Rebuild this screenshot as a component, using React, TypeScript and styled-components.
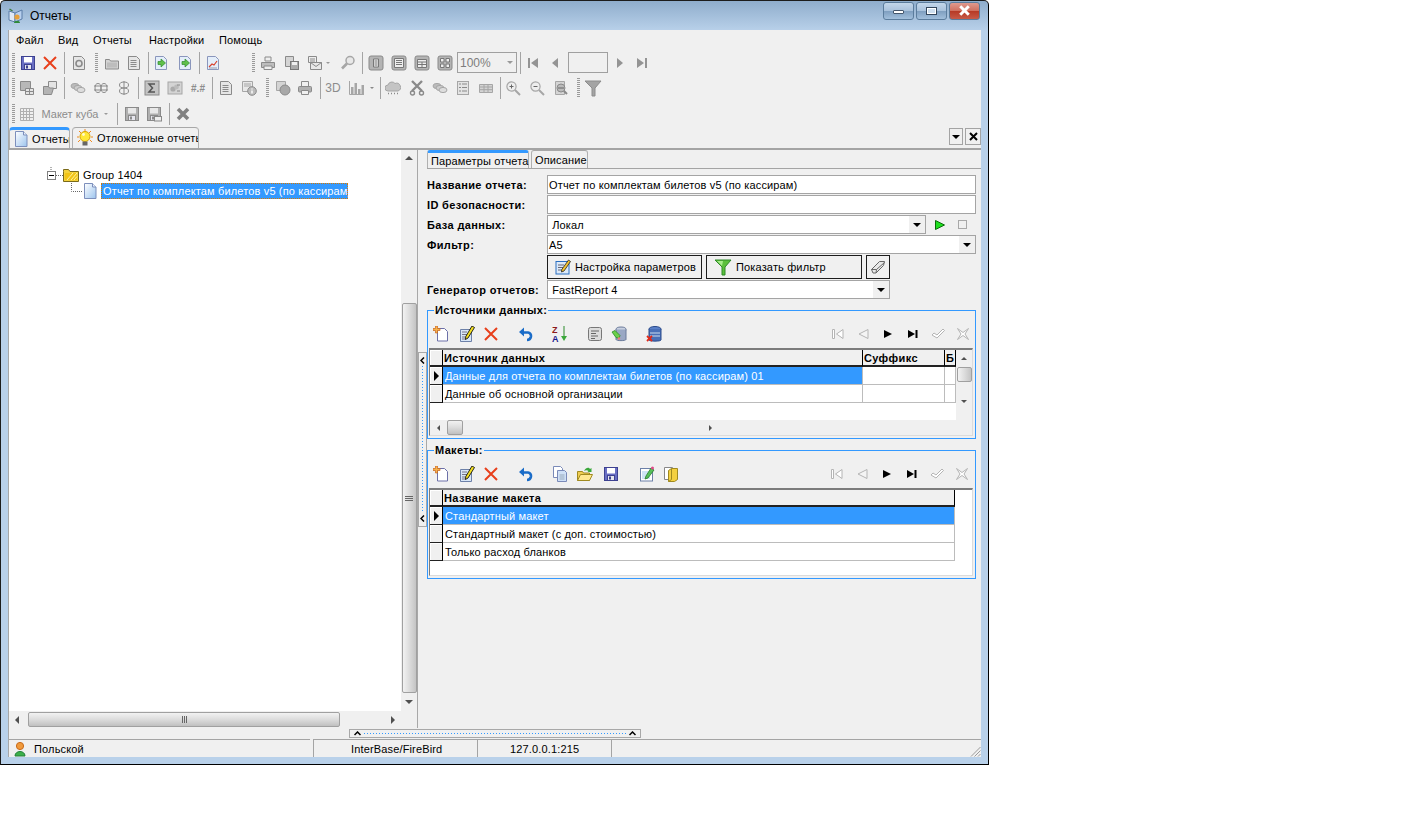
import React from "react";
import styled, { createGlobalStyle } from "styled-components";

const Global = createGlobalStyle`
  html, body { margin: 0; padding: 0; background: #fff; }
  body { font-family: "Liberation Sans", Arial, sans-serif; font-size: 11px; color: #000; }
  * { box-sizing: border-box; }
  svg { display: block; flex: none; }
`;

const Window = styled.div`
  width: 989px; height: 765px;
  border: 1px solid #1c1c1c; border-bottom-color: #000; border-right-color: #000;
  border-radius: 5px 5px 0 0;
  padding: 0 7px 7px 7px;
  background: linear-gradient(#8fadcc 0, #b9d1ea 30px, #b9d1ea 100%);
  display: flex; flex-direction: column;
`;
const TitleBar = styled.div`
  height: 29px; display: flex; align-items: center; flex: none; position: relative;
`;
const TitleText = styled.span` font-size: 12px; margin-left: 6px; `;
const WinButtons = styled.div`
  margin-left: auto; margin-right: 1px; margin-top: -10px; display: flex; gap: 2px;
`;
const WinBtn = styled.div<{ $w: number; $close?: boolean }>`
  width: ${p => p.$w}px; height: 18px; border: 1px solid #5b7c9c; border-radius: 3px;
  display: flex; align-items: center; justify-content: center;
  background: ${p => p.$close
    ? "linear-gradient(#e09a8e 0, #d0705f 48%, #b73a26 52%, #c75a48 100%)"
    : "linear-gradient(#c3d6ea 0, #a9c2dc 48%, #7f9fc0 52%, #a2bfdc 100%)"};
`;
const MinGlyph = styled.div`
  width: 11px; height: 4px; margin-top: 3px; background: #fff; border: 1px solid #44566c; border-radius: 1px;
`;
const MaxGlyph = styled.div`
  width: 11px; height: 8px; background: #cfe0f0; border: 1px solid #33465c; box-shadow: inset 0 0 0 1px #fff; 
`;

const Client = styled.div`
  flex: 1; display: flex; flex-direction: column; background: #f0f0f0; min-height: 0;
  border-left: 1px solid #a8a8a8;
`;
const MenuBar = styled.div`
  height: 20px; display: flex; align-items: center; flex: none;
`;
const MenuItem = styled.span<{ $w: number }>`
  width: ${p => p.$w}px; flex: none; white-space: nowrap; letter-spacing: .15px;
`;
const MenuLead = styled.div` width: 7px; flex: none; `;

const Toolbar = styled.div<{ $h: number }>`
  height: ${p => p.$h}px; display: flex; align-items: center; flex: none;
`;
const Grip = styled.div<{ $w: number }>`
  width: ${p => p.$w}px; height: 20px; flex: none; display: flex; justify-content: center;
  &::before { content: ""; width: 3px; height: 100%;
    background: repeating-linear-gradient(#9a9a9a 0 1px, transparent 1px 2px); }
`;
const Cell = styled.div<{ $w: number }>`
  width: ${p => p.$w}px; flex: none; height: 22px; display: flex; align-items: center; justify-content: center;
`;
const Sep = styled.div<{ $w: number }>`
  width: ${p => p.$w}px; flex: none; height: 22px; display: flex; justify-content: center;
  &::before { content: ""; width: 1px; height: 100%; background: #a4a4a4; }
`;
const DisabledText = styled.span<{ $bold?: boolean; $size?: number }>`
  color: #8c8c8c; font-size: ${p => p.$size ?? 11}px; font-weight: ${p => (p.$bold ? 700 : 400)}; white-space: nowrap;
`;
const ZoomCombo = styled.div`
  width: 60px; height: 21px; border: 1px solid #a0a0a0; flex: none; margin-left: 2px;
  display: flex; align-items: center; justify-content: space-between; padding: 0 3px 0 2px;
  color: #7d7d7d; font-size: 12px; background: #f0f0f0;
`;
const PageInput = styled.div`
  width: 40px; height: 21px; border: 1px solid #a0a0a0; flex: none; margin-left: 1px;
`;
const Tri = styled.i<{ $dir: "l" | "r" | "u" | "d"; $size?: number; $color?: string }>`
  display: block; width: 0; height: 0; flex: none;
  ${p => {
    const s = p.$size ?? 3; const c = p.$color ?? "#000";
    switch (p.$dir) {
      case "l": return `border-top:${s}px solid transparent;border-bottom:${s}px solid transparent;border-right:${s}px solid ${c};`;
      case "r": return `border-top:${s}px solid transparent;border-bottom:${s}px solid transparent;border-left:${s}px solid ${c};`;
      case "u": return `border-left:${s}px solid transparent;border-right:${s}px solid transparent;border-bottom:${s}px solid ${c};`;
      default: return `border-left:${s}px solid transparent;border-right:${s}px solid transparent;border-top:${s}px solid ${c};`;
    }
  }}
`;

const TabStrip = styled.div`
  height: 24px; flex: none; display: flex; align-items: flex-end; padding-left: 0; gap: 2px;
  border-bottom: 2px solid #a4a4a4;
`;
const Tab = styled.div<{ $w: number; $active?: boolean }>`
  width: ${p => p.$w}px; height: 21px; display: flex; align-items: center; gap: 3px; padding-left: 3px;
  border: 1px solid #b0b0b0; border-bottom: 0; border-radius: 4px 4px 0 0;
  border-top: ${p => (p.$active ? "3px solid #3399ff" : "1px solid #a8a8a8")};
  white-space: nowrap; overflow: hidden; letter-spacing: .15px;
`;
const DockButtons = styled.div`
  margin-left: auto; display: flex; gap: 2px; align-self: flex-start; margin-top: 2px;
`;
const DockBtn = styled.div<{ $w: number }>`
  width: ${p => p.$w}px; height: 17px; border: 1px solid #a4a4a4; display: flex; align-items: center; justify-content: center;
`;

const Main = styled.div` flex: 1; min-height: 0; display: flex; `;
const LeftPane = styled.div`
  width: 409px; flex: none; display: flex; flex-direction: column; border-right: 1px solid #a8a8a8;
`;
const LeftBody = styled.div` flex: 1; display: flex; min-height: 0; `;
const Tree = styled.div` flex: 1; background: #fff; padding-top: 17px; `;
const TreeRow = styled.div<{ $indent: number }>`
  height: 16px; display: flex; align-items: center; padding-left: ${p => p.$indent}px; white-space: nowrap;
`;
const TreeLabel = styled.span` margin-left: 4px; letter-spacing: .15px; `;
const TreeSelected = styled.span`
  margin-left: 3px; height: 16px; width: 247px; padding: 0 1px; display: flex; align-items: center;
  background: #3399ff; color: #fff; border: 1px dotted #d97a00; outline: 0; letter-spacing: .15px;
`;

const VScroll = styled.div<{ $w: number }>`
  width: ${p => p.$w}px; flex: none; background: #f0f0f0; display: flex; flex-direction: column; align-items: center;
`;
const ScrollEnd = styled.div<{ $h: number }>`
  height: ${p => p.$h}px; flex: none; display: flex; align-items: center; justify-content: center; width: 100%;
`;
const VThumb = styled.div<{ $h: number; $mt: number }>`
  width: 15px; height: ${p => p.$h}px; margin-top: ${p => p.$mt}px; flex: none;
  border: 1px solid #a0a0a0; border-radius: 2px;
  background: linear-gradient(90deg, #f2f2f2, #dcdcdc 50%, #c4c4c4);
  display: flex; align-items: center; justify-content: center;
`;
const ThumbGripV = styled.div`
  width: 8px; height: 5px; margin-left: 0;
  background: repeating-linear-gradient(#666 0 1px, transparent 1px 2px);
`;
const HScroll = styled.div<{ $h: number }>`
  height: ${p => p.$h}px; flex: none; display: flex; align-items: center; background: #f0f0f0;
`;
const HThumb = styled.div<{ $w: number; $ml: number }>`
  width: ${p => p.$w}px; margin-left: ${p => p.$ml}px; height: 15px; flex: none;
  border: 1px solid #a0a0a0; border-radius: 2px;
  background: linear-gradient(#f2f2f2, #dcdcdc 50%, #c0c0c0);
  display: flex; align-items: center; justify-content: center;
`;
const ThumbGripH = styled.div`
  width: 5px; height: 7px;
  background: repeating-linear-gradient(90deg, #666 0 1px, transparent 1px 2px);
`;
const ScrollEndH = styled.div<{ $w: number }>`
  width: ${p => p.$w}px; flex: none; height: 100%; display: flex; align-items: center; justify-content: center;
`;

const VSplitColumn = styled.div`
  width: 9px; flex: none; padding-top: 202px;
`;
const VHandle = styled.div`
  width: 9px; height: 175px; margin-left: 0; border: 1px solid #a8a8a8; display: flex; flex-direction: column;
  align-items: center; padding: 4px 0;
`;
const DotsV = styled.div`
  flex: 1; width: 1px; margin: 2px 0;
  background: repeating-linear-gradient(#3399ff 0 1px, transparent 1px 3px);
`;
const Chevron = styled.svg` flex: none; `;

const RightPane = styled.div` flex: 1; min-width: 0; display: flex; flex-direction: column; padding-right: 0; `;
const SubTabs = styled.div`
  height: 19px; flex: none; display: flex; align-items: flex-end; gap: 2px; border-bottom: 1px solid #a4a4a4;
`;
const SubTab = styled.div<{ $w: number; $active?: boolean }>`
  width: ${p => p.$w}px; height: 18px; display: flex; align-items: center; padding-left: 3px;
  margin-top: 0; border: 1px solid #b0b0b0; border-bottom: 0; border-radius: 3px 3px 0 0;
  border-top: ${p => (p.$active ? "3px solid #3399ff" : "1px solid #a8a8a8")};
  white-space: nowrap; letter-spacing: .15px;
`;
const RightBody = styled.div` padding: 6px 5px 0 0; display: flex; flex-direction: column; `;

const Form = styled.div`
  display: grid; grid-template-columns: 120px 1fr; row-gap: 1px;
`;
const Label = styled.div`
  font-weight: 700; display: flex; align-items: center; white-space: nowrap; letter-spacing: .35px; height: 19px;
`;
const TextBox = styled.div`
  height: 19px; border: 1px solid #a4a4a4; background: #fff; display: flex; align-items: center; padding-left: 1px;
  white-space: nowrap; letter-spacing: .15px; min-width: 0; flex: 1;
`;
const ComboArrow = styled.div`
  margin-left: auto; width: 16px; height: 17px; background: #f0f0f0; display: flex; align-items: center; justify-content: center; flex: none;
`;
const DbRow = styled.div` display: flex; align-items: center; `;
const DbExtras = styled.div` width: 50px; flex: none; display: flex; align-items: center; padding-left: 8px; gap: 12px; `;
const StopBox = styled.div` width: 9px; height: 9px; border: 1px solid #a8a8a8; flex: none; `;
const Spacer = styled.div``;
const ButtonRow = styled.div` display: flex; gap: 4px; height: 24px; `;
const ActionButton = styled.div<{ $w: number }>`
  width: ${p => p.$w}px; height: 24px; border: 1px solid #1c1c1c; background: #f0f0f0;
  display: flex; align-items: center; padding-left: 7px; gap: 4px; white-space: nowrap; letter-spacing: .15px; flex: none;
`;
const EraserButton = styled(ActionButton)` justify-content: center; padding: 0; gap: 0; `;
const GenCombo = styled(TextBox)` flex: none; width: 343px; `;

const Group = styled.div<{ $pr: number }>`
  height: 129px; margin-top: 11px; border: 1px solid #3399ff; flex: none; display: flex; flex-direction: column;
  --pr: ${p => p.$pr}px;
`;
const Legend = styled.div`
  margin: -8px 0 0 6px; width: fit-content; padding: 0 1px; height: 14px; line-height: 14px;
  background: #f0f0f0; font-weight: 700; letter-spacing: .35px; white-space: nowrap;
`;
const GroupTools = styled.div`
  height: 22px; margin-top: 6px; display: flex; align-items: center; flex: none; padding-right: var(--pr);
`;
const GroupIcon = styled.div<{ $gap: number }>`
  width: 22px; height: 22px; margin-left: ${p => p.$gap}px; flex: none; display: flex; align-items: center; justify-content: center;
`;
const NavGroup = styled.div` margin-left: auto; display: flex; `;
const NavIcon = styled.div` width: 25px; height: 22px; display: flex; align-items: center; justify-content: center; `;

const GridFrame = styled.div`
  margin: 3px 2px 2px 1px; flex: 1; min-height: 0; background: #fff;
  border-top: 2px solid #7c7c7c; border-left: 1px solid #7c7c7c;
  border-right: 1px solid #dcdcdc; border-bottom: 1px solid #dcdcdc;
  display: flex; flex-direction: column;
`;
const GridTop = styled.div` flex: 1; display: flex; min-height: 0; `;
const GridColumns = styled.div` flex: 1; min-width: 0; display: flex; flex-direction: column; `;
const GridRow = styled.div` display: flex; height: 18px; flex: none; `;
const HeaderRow = styled(GridRow)` height: 17px; `;
const Indicator = styled.div<{ $header?: boolean }>`
  width: 13px; flex: none; background: #f0f0f0; display: flex; align-items: center; justify-content: center;
  border-right: 1px solid #000; border-bottom: ${p => (p.$header ? "2px solid #222" : "1px solid #222")};
  box-shadow: inset 1px 1px 0 #fff;
`;
const HeaderCell = styled.div<{ $w: number }>`
  width: ${p => p.$w}px; flex: none; background: #f0f0f0; font-weight: 700; letter-spacing: .35px;
  border-right: 1px solid #000; border-bottom: 2px solid #222; padding-left: 1px; overflow: hidden; white-space: nowrap;
  display: flex; align-items: center;
`;
const DataCell = styled.div<{ $w: number; $sel?: boolean }>`
  width: ${p => p.$w}px; flex: none; overflow: hidden; white-space: nowrap; padding-left: 2px; letter-spacing: .15px;
  display: flex; align-items: center;
  color: ${p => (p.$sel ? "#fff" : "#000")};
  background: ${p => (p.$sel ? "#3399ff" : "#fff")};
  border-right: 1px solid #bcbcbc; border-bottom: 1px solid #bcbcbc;
`;

const HSplitRow = styled.div` height: 11px; flex: none; padding: 1px 0 0 340px; `;
const HHandle = styled.div`
  width: 292px; height: 9px; border: 1px solid #a8a8a8; display: flex; align-items: center; padding: 0 4px; gap: 3px;
`;
const DotsH = styled.div`
  flex: 1; height: 1px;
  background: repeating-linear-gradient(90deg, #3399ff 0 1px, transparent 1px 3px);
`;

const StatusBar = styled.div` height: 18px; flex: none; display: flex; `;
const StatusPanel = styled.div<{ $w?: number; $pl: number; $first?: boolean }>`
  ${p => (p.$w ? `width:${p.$w}px;flex:none;` : "flex:1;")}
  border-top: 1px solid #a4a4a4; border-left: ${p => (p.$first ? "0" : "1px solid #a4a4a4")};
  padding-left: ${p => p.$pl}px; display: flex; align-items: center; gap: 5px; white-space: nowrap; letter-spacing: .15px;
  position: relative;
`;
const StatusGap = styled.div` width: 3px; flex: none; `;
const ResizeGrip = styled.svg` position: absolute; right: 0; bottom: 0; `;

/* ---------- icons ---------- */
const S: React.FC<{ children: React.ReactNode; w?: number; h?: number }> = ({ children, w = 16, h = 16 }) => (
  <svg width={w} height={h} viewBox={`0 0 ${w} ${h}`}>{children}</svg>
);

const Floppy = ({ body, dark, label = "#fff", small }: { body: string; dark: string; label?: string; small?: boolean }) => (
  <S>
    <rect x="1.5" y="1.5" width="13" height="13" fill={body} stroke={dark} />
    <rect x="4" y="2" width="8" height="5.5" fill={label} />
    <rect x="4.5" y="9.5" width="7" height="5" fill="#e6e6ee" stroke={dark} />
    <rect x="6" y="10.5" width="2" height="3" fill={dark} />
    {small && <rect x="8.5" y="10.5" width="7" height="4.5" fill="#eee" stroke="#888" />}
  </S>
);
const RedX = () => (
  <S><path d="M2 2l12 12M14 2L2 14" stroke="#e8401c" strokeWidth="2" fill="none" /></S>
);
const DocBase = ({ children, stroke = "#8a96bc", fill = "#e4eefa" }: { children?: React.ReactNode; stroke?: string; fill?: string }) => (
  <S>
    <path d="M2.5 1.5h8l3 3v10h-11z" fill={fill} stroke={stroke} />
    {children}
  </S>
);
const DocArrow = () => (
  <DocBase><path d="M5 6.5h3V4l4.5 4-4.5 4V9.5H5z" fill="#5fc04a" stroke="#2f8a2c" strokeWidth=".7" /></DocBase>
);
const DocChart = () => (
  <DocBase><path d="M4 12l3-3 2 1 3-4" stroke="#d8402c" strokeWidth="1.2" fill="none" /><path d="M4 13h8" stroke="#99a" /></DocBase>
);
const G = "#a6a6a6"; const GD = "#8a8a8a"; const GL = "#d4d4d4";
const grayDoc = (children?: React.ReactNode) => <DocBase stroke={GD} fill="#e6e6e6">{children}</DocBase>;
const GrayLines = () => grayDoc(<path d="M4.5 5.5h6M4.5 7.5h6M4.5 9.5h6M4.5 11.5h6" stroke={GD} />);
const GrayRefresh = () => grayDoc(<circle cx="8" cy="8.5" r="3" fill="none" stroke={GD} strokeWidth="1.6" />);
const GrayFolder = () => (
  <S><path d="M1.5 4.5h4l1 1.5h8v8h-13z" fill={GL} stroke={GD} /><path d="M3 7.5h10v5H3z" fill="#bdbdbd" /></S>
);
const GrayPrinter = () => (
  <S><path d="M5 2h6v4H5z" fill="#eee" stroke={GD} /><path d="M1.5 7.5h13v5h-13z" fill="#bdbdbd" stroke={GD} /><path d="M4 11h8v3.5H4z" fill="#eee" stroke={GD} /></S>
);
const GrayDocFloppy = () => (
  <S><path d="M1.5 1.5h8v10h-8z" fill={GL} stroke={GD} /><rect x="6.5" y="6.5" width="8" height="8" fill="#aaa" stroke="#777" /><rect x="8" y="7" width="5" height="3" fill="#eee" /></S>
);
const GrayMail = () => (
  <S><path d="M1.5 1.5h8v6h-8z" fill="#eee" stroke={GD} /><path d="M3 4h5M3 6h5" stroke={GD} /><path d="M3.5 7.5h11v7h-11z" fill="#e8e8e8" stroke={GD} /><path d="M3.5 7.5l5.5 4 5.5-4" fill="none" stroke={GD} /></S>
);
const GrayMagnifier = () => (
  <S><circle cx="10" cy="5.5" r="4" fill="#e8e8e8" stroke={G} strokeWidth="1.5" /><path d="M7 8.5l-5 5" stroke={G} strokeWidth="2.6" /></S>
);
const GrayPage = ({ kind }: { kind: number }) => (
  <S>
    <rect x="1" y="1" width="14" height="14" rx="2" fill="#b4b4b4" stroke={GD} />
    {kind === 0 && <path d="M5.5 4h5v8h-5zM6.5 6h3M6.5 8h3M6.5 10h3" fill="#eee" stroke="#777" />}
    {kind === 1 && <path d="M3.5 3.5h9v9h-9zM5 5.5h6M5 7.5h6M5 9.5h6" fill="#eee" stroke="#777" />}
    {kind === 2 && <path d="M3.5 4.5h9v8h-9zM3.5 7h9M3.5 9.5h9M8 7v5.5" fill="#eee" stroke="#777" />}
    {kind === 3 && <path d="M3.5 3.5h3.5v3.5h-3.5zM9 3.5h3.5v3.5H9zM3.5 9h3.5v3.5h-3.5zM9 9h3.5v3.5H9z" fill="#eee" stroke="#777" />}
  </S>
);
const TriFirst = ({ c = "#949494" }: { c?: string }) => (
  <S w={14} h={12}><path d="M2 1h2v10H2zM12 1v10L5 6z" fill={c} /></S>
);
const TriLast = ({ c = "#949494" }: { c?: string }) => (
  <S w={14} h={12}><path d="M10 1h2v10h-2zM2 1v10l7-5z" fill={c} /></S>
);
const GrayTriPrev = () => <S w={10} h={12}><path d="M8 1v10L2 6z" fill="#949494" /></S>;
const GrayTriNext = () => <S w={10} h={12}><path d="M2 1v10l6-5z" fill="#949494" /></S>;
const GrayFloppyGrid = () => (
  <S><path d="M1.5 1.5h10v9h-10z" fill="#b8b8b8" stroke={GD} /><path d="M6.5 8.5h8v6h-8z" fill="#e4e4e4" stroke={GD} /><path d="M6.5 11.5h8M10.5 8.5v6" stroke={GD} /></S>
);
const GrayFolderOpen = () => (
  <S><path d="M6.5 1.5h8v7h-8z" fill="#e4e4e4" stroke={GD} /><path d="M1.5 6.5h5l1 1.5h4l-2 6.5h-8z" fill="#b4b4b4" stroke={GD} /></S>
);
const GrayStack = () => (
  <S><ellipse cx="5" cy="6" rx="4" ry="2.6" fill="#bbb" stroke={G} /><ellipse cx="8" cy="8" rx="4" ry="2.6" fill="#ccc" stroke={G} /><ellipse cx="11" cy="10" rx="4" ry="2.6" fill="#ddd" stroke={G} /></S>
);
const GrayRings = () => (
  <S><ellipse cx="5" cy="8" rx="3" ry="4.5" fill="none" stroke={GD} /><ellipse cx="11" cy="8" rx="3" ry="4.5" fill="none" stroke={GD} /><path d="M1 6h14M1 10h14" stroke={GD} /></S>
);
const GrayRings2 = () => (
  <S><ellipse cx="8" cy="5" rx="4.5" ry="3" fill="none" stroke={GD} /><ellipse cx="8" cy="11" rx="4.5" ry="3" fill="none" stroke={GD} /><path d="M8 1v14" stroke={GD} /></S>
);
const GraySigma = () => (
  <S><rect x="1" y="1" width="14" height="14" fill="#c4c4c4" stroke={GD} /><path d="M11 4H5l3.5 4L5 12h6" fill="none" stroke="#555" strokeWidth="1.5" /></S>
);
const GrayPicture = () => (
  <S><rect x="1" y="2" width="14" height="12" fill={GL} stroke={G} /><circle cx="6" cy="9" r="2.6" fill="#aaa" /><circle cx="9.5" cy="7" r="2.4" fill="#bbb" /><path d="M10 11h3M10 5h3" stroke={GD} /></S>
);
const GrayInfo = () => (
  <S><path d="M1.5 1.5h10v10h-10z" fill="#e8e8e8" stroke={G} /><path d="M3 4h7M3 6h7" stroke={G} /><circle cx="11" cy="11" r="4.3" fill="#bbb" stroke={GD} /><path d="M11 8.5v1M11 10.5v3" stroke="#fff" strokeWidth="1.4" /></S>
);
const GrayPie = () => (
  <S><path d="M1.5 1.5h9v9h-9z" fill={GL} stroke={G} /><circle cx="10" cy="10" r="5" fill="#a8a8a8" stroke={GD} /></S>
);
const GrayPrinter2 = () => (
  <S><path d="M4.5 1.5h7v5h-7z" fill="#f0f0f0" stroke={GD} /><rect x="1.5" y="6.5" width="13" height="5.5" rx="1" fill="#b0b0b0" stroke={GD} /><path d="M4.5 10.5h7v4h-7z" fill="#f0f0f0" stroke={GD} /></S>
);
const GrayChart = () => (
  <S><path d="M1.5 1v13.5H16" fill="none" stroke={G} /><path d="M3 7h2.5v7H3zM6.5 3h2.5v11H6.5zM10 9h2.5v5H10zM13.5 5H16v9h-2.5z" fill={G} /></S>
);
const GrayCloud = () => (
  <S><path d="M3 11a3 3 0 010-6 4 4 0 017-1.5A3.6 3.6 0 0113 11z" fill="#c4c4c4" stroke={G} /><path d="M3 13.5h1M6 13.5h1M9 13.5h1M12 13.5h1" stroke={GD} strokeWidth="1.5" /></S>
);
const GrayScissors = () => (
  <S><path d="M3 1l10 10M13 1L3 11" stroke={GD} strokeWidth="2.4" /><circle cx="3.5" cy="13" r="2" fill="none" stroke={GD} strokeWidth="1.4" /><circle cx="12.5" cy="13" r="2" fill="none" stroke={GD} strokeWidth="1.4" /></S>
);
const GrayList = () => (
  <S><rect x="2.5" y="1.5" width="11" height="13" fill="#e4e4e4" stroke={G} /><path d="M4 4h2M4 7.5h2M4 11h2M7 4h5M7 7.5h5M7 11h5" stroke={GD} /></S>
);
const GrayTable = () => (
  <S><path d="M1.5 4.5h13v8h-13zM1.5 7h13M1.5 9.7h13M6 4.5v8M10 4.5v8" fill={GL} stroke={G} /></S>
);
const Zoom = ({ mark }: { mark: "+" | "-" }) => (
  <S>
    <circle cx="6.5" cy="6.5" r="4.6" fill="#eee" stroke={G} strokeWidth="1.2" />
    <path d="M10 10l5 5" stroke={G} strokeWidth="2" />
    <path d={mark === "+" ? "M4.5 6.5h4M6.5 4.5v4" : "M4.5 6.5h4"} stroke="#666" />
  </S>
);
const GrayDocZoom = () => (
  <S><path d="M2.5 1.5h9v13h-9z" fill={GL} stroke={G} /><circle cx="8" cy="8" r="4" fill="#bbb" stroke={GD} /><path d="M5 8h6" stroke="#666" /><path d="M11 11l3 3" stroke={GD} strokeWidth="2" /></S>
);
const GrayFunnel = () => (
  <S w={18} h={18}><path d="M1 2h16l-6 7v8H8V9z" fill="#a4a4a4" stroke="#8c8c8c" /></S>
);
const GrayGrid = () => (
  <S><path d="M1.5 2.5h13v12h-13zM1.5 5.5h13M1.5 8.5h13M1.5 11.5h13M4.5 2.5v12M7.5 2.5v12M10.5 2.5v12" fill="none" stroke="#b0b0b0" /></S>
);
const GrayCross = () => (
  <S><path d="M3 3l10 10M13 3L3 13" stroke="#808080" strokeWidth="3.6" /></S>
);

const TitleIcon = () => (
  <S>
    <path d="M1 3l6 2v9L1 12z" fill="#dfe9f5" stroke="#5a7da8" />
    <path d="M7 5l7-3v9l-7 3z" fill="#b8d0ee" stroke="#5a7da8" />
    <circle cx="9" cy="9" r="2.6" fill="#e6a13a" />
    <path d="M6 15c0-3 6-3 6 0z" fill="#2e8a3a" />
    <path d="M1.5 1l3 2" stroke="#3a7a3a" strokeWidth="1.4" />
  </S>
);
const PageIcon = () => (
  <S w={16} h={18}>
    <defs>
      <linearGradient id="pg" x1="0" y1="0" x2="1" y2="1">
        <stop offset="0" stopColor="#fff" /><stop offset="1" stopColor="#9cc4ee" />
      </linearGradient>
    </defs>
    <path d="M2.5 1.5h8l3.5 3.5v11.5H2.5z" fill="url(#pg)" stroke="#7d8fbc" />
    <path d="M10.5 1.5v3.5H14" fill="#e8f0fa" stroke="#7d8fbc" />
  </S>
);
const Bulb = () => (
  <S w={18} h={18}>
    <path d="M1 8h2M15 8h2M3 2l2 2M15 2l-2 2M9 0v2M2 13l2-2M16 13l-2-2" stroke="#f08a20" />
    <circle cx="9" cy="7.5" r="5" fill="#ffe838" stroke="#d8a400" />
    <rect x="6.5" y="12.5" width="5" height="4" fill="#666" />
    <circle cx="7.5" cy="5.5" r="1.4" fill="#fffbd0" />
  </S>
);
const FolderYellow = () => (
  <S>
    <path d="M.5 4.5V2.5h5l1.5 2h8.5v10H.5z" fill="#f4d23c" stroke="#7a6a1a" />
    <path d="M2 6h12v7H2z" fill="#f2c416" />
    <path d="M8 13l6-7M11 13l3-3.5M4 13l6-7" stroke="#fff2a0" />
  </S>
);
const TreeExpander = () => (
  <S w={20} h={16}>
    <path d="M8 0v4" stroke="#666" strokeDasharray="1 1" />
    <rect x="4.5" y="4.5" width="8" height="8" fill="#fff" stroke="#808080" />
    <path d="M6 8.5h5" stroke="#000" />
    <path d="M13 8.5h7" stroke="#666" strokeDasharray="1 1" />
  </S>
);
const TreeConnector = () => (
  <S w={11} h={16}>
    <path d="M.5 0v8.5H11" fill="none" stroke="#666" strokeDasharray="1 1" />
  </S>
);
const ParamsIcon = () => (
  <S>
    <rect x="1" y="2.5" width="13" height="12.5" fill="#dce9f8" stroke="#2a6fc0" />
    <path d="M3 6h6M3 8.5h5M3 11h4" stroke="#667" />
    <path d="M13.5 1l2 1.5L9 12l-2.5 1 .3-2.5z" fill="#f4c430" stroke="#222" strokeWidth=".8" />
  </S>
);
const GreenFunnel = () => (
  <S w={18} h={18}>
    <path d="M1 2h16l-6 7v8H8V9z" fill="#5cc03c" stroke="#2f8a28" />
    <path d="M3 3h6l-1 5z" fill="#a8ec8c" />
  </S>
);
const Eraser = () => (
  <S w={16} h={16}>
    <path d="M1.5 10.5l8-8h5l-1 4-7.5 7.5H3z" fill="#e8e8e8" stroke="#666" />
    <path d="M1.5 10.5h5l-.5 3.5M6.5 10.5l8-7" fill="none" stroke="#666" />
  </S>
);
const NewDoc = () => (
  <S>
    <path d="M4.5 2.5h7l3 3v9.5h-10z" fill="#fff" stroke="#6c70a8" />
    <path d="M2.5 0h2v2.5H7v2H4.500v2.500h-2V4.500H0v-2h2.500z" fill="#f7b14a" stroke="#c8641a" strokeWidth=".7" />
  </S>
);
const EditDoc = () => (
  <S>
    <path d="M1.500 3.500h11v12h-11z" fill="#d8e6f6" stroke="#6c80a8" />
    <path d="M3 6h5M3 8.500h5M3 11h4M3 13h4" stroke="#778" />
    <path d="M13 0l2.500 1.500L9 12l-2.500 1.500.3-3z" fill="#f4e020" stroke="#111" strokeWidth=".9" />
  </S>
);
const Undo = () => (
  <S>
    <path d="M4 6.500h6a3.500 3.500 0 013 4c-.4 2-2 3.500-4 3.500" fill="none" stroke="#1a6cc8" strokeWidth="2.600" />
    <path d="M1 6l5-4.500v9z" fill="#1a6cc8" />
  </S>
);
const Sort = () => (
  <S w={18} h={18}>
    <text x="0" y="8" fontSize="9" fontWeight="700" fontFamily="Liberation Sans" fill="#8c1a1a">Z</text>
    <text x="0" y="17" fontSize="9" fontWeight="700" fontFamily="Liberation Sans" fill="#1a1a8c">A</text>
    <path d="M12 1v12" stroke="#2a8a2a" />
    <path d="M9 11h6l-3 5z" fill="#3aa83a" />
  </S>
);
const TextBoxIcon = () => (
  <S><rect x="1.500" y="1.500" width="13" height="13" rx="2" fill="#ddd" stroke="#777" /><path d="M4 5h8M4 7.500h5M4 10h7M4 12.500h4" stroke="#666" /></S>
);
const DbEdit = () => (
  <S>
    <ellipse cx="10" cy="3.500" rx="5" ry="2.500" fill="#c8d0e0" stroke="#6a7a9a" />
    <path d="M5 3.500v10c0 1.500 10 1.500 10 0v-10" fill="#9aa8c4" stroke="#6a7a9a" />
    <path d="M1 6l3-1.500 5 5-1 3-3-1z" fill="#6cd04a" stroke="#2a8a2a" strokeWidth=".8" />
    <circle cx="8" cy="12.500" r="1.200" fill="#f07a7a" />
  </S>
);
const DbDel = () => (
  <S>
    <ellipse cx="9" cy="3" rx="6" ry="2.500" fill="#5a80c8" stroke="#2a4a8a" />
    <path d="M3 3v11c0 1.500 12 1.500 12 0V3" fill="#4a70b8" stroke="#2a4a8a" />
    <path d="M4 7h10M4 10h10" stroke="#cde" />
    <path d="M1 10l5 5M6 10l-5 5" stroke="#e02a1a" strokeWidth="1.800" />
  </S>
);
const CopyDocs = () => (
  <S>
    <path d="M1.500 .5h7l2 2v9h-9z" fill="#fff" stroke="#7a8ab8" />
    <path d="M5.500 4.500h7l2 2v9h-9z" fill="#cfe0f6" stroke="#7a8ab8" />
    <path d="M7.500 9h5M7.500 11h5M7.500 13h5" stroke="#9ab" />
  </S>
);
const OpenFolder = () => (
  <S>
    <path d="M.5 5.500h5l1 1.500h6v7.500H.5z" fill="#f0cc50" stroke="#a08a20" />
    <path d="M.5 14.500l3-6h12l-3 6z" fill="#ffe890" stroke="#a08a20" />
    <path d="M7 5c2-4 5-4 6-2l1.500-1v4h-4l1-1c-1-1-3-1-4.500 0z" fill="#3aa83a" />
  </S>
);
const EditChart = () => (
  <S>
    <rect x="1.500" y="2.500" width="12" height="12.500" fill="#fff" stroke="#6c80a8" />
    <path d="M3 5h8v8H3z" fill="#cfe4f6" />
    <path d="M12 2l3 2-6 8-3 1 1-3z" fill="#55c05a" stroke="#2a7a2a" strokeWidth=".8" />
    <circle cx="13.500" cy="2" r="1.500" fill="#e04a8a" />
  </S>
);
const FoldersDoc = () => (
  <S>
    <path d="M1.500 1.500h8v12h-8z" fill="#fff" stroke="#888" />
    <path d="M5.500 4.500l3-2h6v11l-3 2h-6z" fill="#f4d040" stroke="#a08a20" />
    <path d="M8.500 2.500v11l-3 2" fill="none" stroke="#a08a20" />
  </S>
);
const OutlineFirst = () => <S><path d="M2.500 3.500h2v9h-2zM13 3.500v9L6.500 8z" fill="#fff" stroke="#b4b4b4" /></S>;
const OutlinePrev = () => <S><path d="M13 3.500v9L4 8z" fill="#f4f4f4" stroke="#b4b4b4" /></S>;
const BlackNext = () => <S><path d="M4 4v8l8-4z" fill="#000" /></S>;
const BlackLast = () => <S><path d="M3 4v8l7-4zM10.500 4h2v8h-2z" fill="#000" /></S>;
const OutlineCheck = () => <S><path d="M2 9l2-2 3 2 6-6 1.500 1.500L7 12z" fill="#fff" stroke="#b4b4b4" /></S>;
const OutlineX = () => <S><path d="M2.500 2.500l5.500 4 5.500-4-3.500 5.500 3.500 5.500L8 9.500l-5.500 4L6 8z" fill="#fff" stroke="#b4b4b4" /></S>;
const PlayGreen = () => <S w={12} h={12}><path d="M1.500 1.500v9l9-4.500z" fill="#1fe01f" stroke="#0a6a0a" /></S>;
const UserIcon = () => (
  <S>
    <circle cx="7" cy="5" r="3.600" fill="#f09a3c" stroke="#c86a1a" />
    <path d="M2 15c0-6 10-6 10 0z" fill="#3cb04a" stroke="#22803a" />
  </S>
);
const ChevL = () => (
  <Chevron width="5" height="7" viewBox="0 0 5 7"><path d="M4 .5L1 3.500 4 6.500" fill="none" stroke="#000" strokeWidth="1.500" /></Chevron>
);
const ChevU = () => (
  <Chevron width="7" height="5" viewBox="0 0 7 5"><path d="M.500 4L3.500 1 6.500 4" fill="none" stroke="#000" strokeWidth="1.500" /></Chevron>
);
const CloseGlyph = ({ c = "#000", s = 9, w = 2 }: { c?: string; s?: number; w?: number }) => (
  <svg width={s} height={s} viewBox="0 0 9 9"><path d="M1 1l7 7M8 1L1 8" stroke={c} strokeWidth={w} /></svg>
);

/* ---------- toolbar data ---------- */
type Item =
  | { t: "grip" | "sep" | "gap"; w: number }
  | { t: "icon"; w: number; el: React.ReactNode };
const ic = (w: number, el: React.ReactNode): Item => ({ t: "icon", w, el });
const grip = (w: number): Item => ({ t: "grip", w });
const sep = (w: number): Item => ({ t: "sep", w });

const row1: Item[] = [
  grip(8), ic(22, <Floppy body="#6a6fc4" dark="#3d4190" />), ic(22, <RedX />), sep(6),
  ic(23, <GrayRefresh />), grip(12), ic(20, <GrayFolder />), ic(24, <GrayLines />), sep(4),
  ic(22, <DocArrow />), ic(26, <DocArrow />), sep(2), ic(26, <DocChart />),
  { t: "gap", w: 23 }, grip(8), ic(22, <GrayPrinter />), ic(26, <GrayDocFloppy />), ic(20, <GrayMail />),
  ic(6, <Tri $dir="d" $size={2} $color="#999" />), { t: "gap", w: 4 }, ic(26, <GrayMagnifier />), sep(2),
  ic(26, <GrayPage kind={0} />), ic(20, <GrayPage kind={1} />), ic(26, <GrayPage kind={2} />), ic(20, <GrayPage kind={3} />),
];
const row1b: Item[] = [
  sep(6), ic(20, <TriFirst />), ic(24, <GrayTriPrev />),
];
const row1c: Item[] = [ic(24, <GrayTriNext />), ic(20, <TriLast />)];
const row2: Item[] = [
  grip(8), ic(20, <GrayFloppyGrid />), ic(26, <GrayFolderOpen />), sep(2),
  ic(26, <GrayStack />), ic(20, <GrayRings />), ic(26, <GrayRings2 />), sep(2),
  ic(26, <GraySigma />), ic(20, <GrayPicture />), ic(26, <DisabledText $bold $size={10}>#.#</DisabledText>), sep(2),
  ic(26, <GrayLines />), ic(20, <GrayInfo />), grip(16), ic(16, <GrayPie />), ic(28, <GrayPrinter2 />), sep(2),
  ic(24, <DisabledText $size={12}>3D</DisabledText>), ic(22, <GrayChart />), ic(10, <Tri $dir="d" $size={2} $color="#888" />), sep(6),
  ic(20, <GrayCloud />), ic(28, <GrayScissors />), ic(18, <GrayStack />), ic(28, <GrayList />), ic(18, <GrayTable />), sep(10),
  ic(16, <Zoom mark="+" />), ic(32, <Zoom mark="-" />), ic(16, <GrayDocZoom />), grip(18), ic(12, <GrayFunnel />),
];
const row3: Item[] = [
  grip(8), ic(20, <GrayGrid />), { t: "gap", w: 2 },
  ic(62, <DisabledText>Макет куба</DisabledText>), ic(10, <Tri $dir="d" $size={2} $color="#999" />), sep(12),
  ic(17, <Floppy body="#b0b0b0" dark="#8a8a8a" label="#e8e8e8" />), ic(28, <Floppy body="#b0b0b0" dark="#8a8a8a" label="#e8e8e8" small />), sep(2),
  ic(26, <GrayCross />),
];

const renderItems = (items: Item[]) =>
  items.map((it, i) => {
    if (it.t === "grip") return <Grip key={i} $w={it.w} />;
    if (it.t === "sep") return <Sep key={i} $w={it.w} />;
    if (it.t === "gap") return <Cell key={i} $w={it.w} />;
    return <Cell key={i} $w={it.w}>{it.el}</Cell>;
  });

const Nav = () => (
  <NavGroup>
    <NavIcon><OutlineFirst /></NavIcon>
    <NavIcon><OutlinePrev /></NavIcon>
    <NavIcon><BlackNext /></NavIcon>
    <NavIcon><BlackLast /></NavIcon>
    <NavIcon><OutlineCheck /></NavIcon>
    <NavIcon><OutlineX /></NavIcon>
  </NavGroup>
);

const Dropdown = () => (
  <ComboArrow><Tri $dir="d" $size={4} /></ComboArrow>
);

export default function App() {
  return (
    <>
      <Global />
      <Window>
        <TitleBar>
          <TitleIcon />
          <TitleText>Отчеты</TitleText>
          <WinButtons>
            <WinBtn $w={31}><MinGlyph /></WinBtn>
            <WinBtn $w={31}><MaxGlyph /></WinBtn>
            <WinBtn $w={31} $close><CloseGlyph c="#fff" s={11} w={2.4} /></WinBtn>
          </WinButtons>
        </TitleBar>
        <Client>
          <MenuBar>
            <MenuLead />
            <MenuItem $w={42}>Файл</MenuItem>
            <MenuItem $w={35}>Вид</MenuItem>
            <MenuItem $w={56}>Отчеты</MenuItem>
            <MenuItem $w={70}>Настройки</MenuItem>
            <MenuItem $w={60}>Помощь</MenuItem>
          </MenuBar>
          <Toolbar $h={25}>
            {renderItems(row1)}
            <ZoomCombo>100%<Tri $dir="d" $size={3} $color="#999" /></ZoomCombo>
            {renderItems(row1b)}
            <PageInput />
            {renderItems(row1c)}
          </Toolbar>
          <Toolbar $h={26}>{renderItems(row2)}</Toolbar>
          <Toolbar $h={25}>{renderItems(row3)}</Toolbar>
          <TabStrip>
            <Tab $w={61} $active><PageIcon />Отчеты</Tab>
            <Tab $w={127}><Bulb />Отложенные отчеты</Tab>
            <DockButtons>
              <DockBtn $w={14}><Tri $dir="d" $size={4} /></DockBtn>
              <DockBtn $w={16}><CloseGlyph /></DockBtn>
            </DockButtons>
          </TabStrip>
          <Main>
            <LeftPane>
              <LeftBody>
                <Tree>
                  <TreeRow $indent={34}>
                    <TreeExpander />
                    <FolderYellow />
                    <TreeLabel>Group 1404</TreeLabel>
                  </TreeRow>
                  <TreeRow $indent={62}>
                    <TreeConnector />
                    <PageIcon />
                    <TreeSelected>Отчет по комплектам билетов v5 (по кассирам)</TreeSelected>
                  </TreeRow>
                </Tree>
                <VScroll $w={16}>
                  <ScrollEnd $h={16}><Tri $dir="u" $size={4} $color="#505050" /></ScrollEnd>
                  <VThumb $h={390} $mt={137}><ThumbGripV /></VThumb>
                  <ScrollEnd $h={17}><Tri $dir="d" $size={4} $color="#505050" /></ScrollEnd>
                </VScroll>
              </LeftBody>
              <HScroll $h={17}>
                <ScrollEndH $w={16}><Tri $dir="l" $size={4} $color="#505050" /></ScrollEndH>
                <HThumb $w={312} $ml={3}><ThumbGripH /></HThumb>
                <ScrollEndH $w={105}><Tri $dir="r" $size={4} $color="#505050" /></ScrollEndH>
              </HScroll>
            </LeftPane>
            <VSplitColumn>
              <VHandle>
                <ChevL />
                <DotsV />
                <ChevL />
              </VHandle>
            </VSplitColumn>
            <RightPane>
              <SubTabs>
                <SubTab $w={102} $active>Параметры отчета</SubTab>
                <SubTab $w={57}>Описание</SubTab>
              </SubTabs>
              <RightBody>
                <Form>
                  <Label>Название отчета:</Label>
                  <TextBox>Отчет по комплектам билетов v5 (по кассирам)</TextBox>
                  <Label>ID безопасности:</Label>
                  <TextBox />
                  <Label>База данных:</Label>
                  <DbRow>
                    <TextBox>&nbsp;Локал<Dropdown /></TextBox>
                    <DbExtras><PlayGreen /><StopBox /></DbExtras>
                  </DbRow>
                  <Label>Фильтр:</Label>
                  <TextBox>A5<Dropdown /></TextBox>
                  <Spacer />
                  <ButtonRow>
                    <ActionButton $w={155}><ParamsIcon />Настройка параметров</ActionButton>
                    <ActionButton $w={156}><GreenFunnel />Показать фильтр</ActionButton>
                    <EraserButton $w={24}><Eraser /></EraserButton>
                  </ButtonRow>
                  <Label>Генератор отчетов:</Label>
                  <GenCombo>&nbsp;FastReport 4<Dropdown /></GenCombo>
                </Form>

                <Group $pr={0}>
                  <Legend>Источники данных:</Legend>
                  <GroupTools>
                    <GroupIcon $gap={2}><NewDoc /></GroupIcon>
                    <GroupIcon $gap={4}><EditDoc /></GroupIcon>
                    <GroupIcon $gap={2}><RedX /></GroupIcon>
                    <GroupIcon $gap={13}><Undo /></GroupIcon>
                    <GroupIcon $gap={13}><Sort /></GroupIcon>
                    <GroupIcon $gap={12}><TextBoxIcon /></GroupIcon>
                    <GroupIcon $gap={2}><DbEdit /></GroupIcon>
                    <GroupIcon $gap={13}><DbDel /></GroupIcon>
                    <Nav />
                  </GroupTools>
                  <GridFrame>
                    <GridTop>
                      <GridColumns>
                        <HeaderRow>
                          <Indicator $header />
                          <HeaderCell $w={420}>Источник данных</HeaderCell>
                          <HeaderCell $w={82}>Суффикс</HeaderCell>
                          <HeaderCell $w={11}>Б</HeaderCell>
                        </HeaderRow>
                        <GridRow>
                          <Indicator><Tri $dir="r" $size={5} /></Indicator>
                          <DataCell $w={420} $sel>Данные для отчета по комплектам билетов (по кассирам) 01</DataCell>
                          <DataCell $w={82} />
                          <DataCell $w={11} />
                        </GridRow>
                        <GridRow>
                          <Indicator />
                          <DataCell $w={420}>Данные об основной организации</DataCell>
                          <DataCell $w={82} />
                          <DataCell $w={11} />
                        </GridRow>
                      </GridColumns>
                      <VScroll $w={16}>
                        <ScrollEnd $h={17}><Tri $dir="u" $size={3} $color="#505050" /></ScrollEnd>
                        <VThumb $h={15} $mt={0} />
                        <ScrollEnd $h={39}><Tri $dir="d" $size={3} $color="#505050" /></ScrollEnd>
                      </VScroll>
                    </GridTop>
                    <HScroll $h={15}>
                      <ScrollEndH $w={17}><Tri $dir="l" $size={3} $color="#505050" /></ScrollEndH>
                      <HThumb $w={16} $ml={0} />
                      <ScrollEndH $w={494}><Tri $dir="r" $size={3} $color="#505050" /></ScrollEndH>
                    </HScroll>
                  </GridFrame>
                </Group>

                <Group $pr={1}>
                  <Legend>Макеты:</Legend>
                  <GroupTools>
                    <GroupIcon $gap={2}><NewDoc /></GroupIcon>
                    <GroupIcon $gap={4}><EditDoc /></GroupIcon>
                    <GroupIcon $gap={2}><RedX /></GroupIcon>
                    <GroupIcon $gap={13}><Undo /></GroupIcon>
                    <GroupIcon $gap={12}><CopyDocs /></GroupIcon>
                    <GroupIcon $gap={3}><OpenFolder /></GroupIcon>
                    <GroupIcon $gap={4}><Floppy body="#6a6fc4" dark="#3d4190" /></GroupIcon>
                    <GroupIcon $gap={14}><EditChart /></GroupIcon>
                    <GroupIcon $gap={2}><FoldersDoc /></GroupIcon>
                    <Nav />
                  </GroupTools>
                  <GridFrame>
                    <HeaderRow>
                      <Indicator $header />
                      <HeaderCell $w={512}>Название макета</HeaderCell>
                    </HeaderRow>
                    <GridRow>
                      <Indicator><Tri $dir="r" $size={5} /></Indicator>
                      <DataCell $w={512} $sel>Стандартный макет</DataCell>
                    </GridRow>
                    <GridRow>
                      <Indicator />
                      <DataCell $w={512}>Стандартный макет (с доп. стоимостью)</DataCell>
                    </GridRow>
                    <GridRow>
                      <Indicator />
                      <DataCell $w={512}>Только расход бланков</DataCell>
                    </GridRow>
                  </GridFrame>
                </Group>
              </RightBody>
            </RightPane>
          </Main>
          <HSplitRow>
            <HHandle><ChevU /><DotsH /><ChevU /></HHandle>
          </HSplitRow>
          <StatusBar>
            <StatusPanel $w={301} $pl={4} $first><UserIcon />Польской</StatusPanel>
            <StatusGap />
            <StatusPanel $w={164} $pl={37}>InterBase/FireBird</StatusPanel>
            <StatusPanel $w={134} $pl={32}>127.0.0.1:215</StatusPanel>
            <StatusPanel $pl={0}>
              <ResizeGrip width="11" height="11" viewBox="0 0 11 11">
                <path d="M10.500 1L1 10.500M10.500 4.500L4.500 10.500M10.500 8L8 10.500" stroke="#9a9a9a" fill="none" />
              </ResizeGrip>
            </StatusPanel>
          </StatusBar>
        </Client>
      </Window>
    </>
  );
}
